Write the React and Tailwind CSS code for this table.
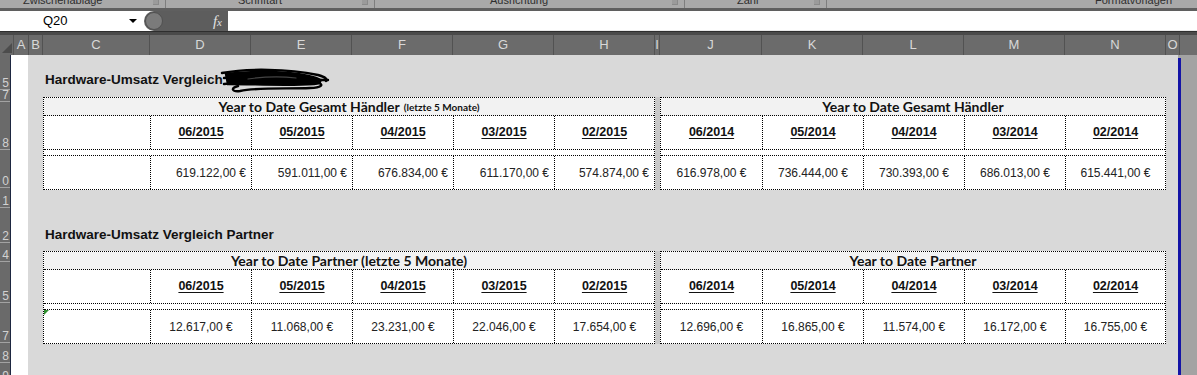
import React from 'react';

const ribbonGroups = [
    { label: 'Zwischenablage', w: 'w-[166px]', pl: 'pl-[23px]' },
    { label: 'Schriftart', w: 'w-[209px]', pl: 'pl-[72px]' },
    { label: 'Ausrichtung', w: 'w-[310px]', pl: 'pl-[115px]' },
    { label: 'Zahl', w: 'w-[142px]', pl: 'pl-[52px]' },
    { label: 'Formatvorlagen', w: 'flex-1', pl: 'pl-[268px]' },
];

const columns = [
    { l: 'A', w: 'w-[15px]' },
    { l: 'B', w: 'w-[14px]' },
    { l: 'C', w: 'w-[107px]' },
    { l: 'D', w: 'w-[101px]' },
    { l: 'E', w: 'w-[101px]' },
    { l: 'F', w: 'w-[101px]' },
    { l: 'G', w: 'w-[101px]' },
    { l: 'H', w: 'w-[101px]' },
    { l: 'I', w: 'w-[5px]' },
    { l: 'J', w: 'w-[102px]' },
    { l: 'K', w: 'w-[101px]' },
    { l: 'L', w: 'w-[101px]' },
    { l: 'M', w: 'w-[101px]' },
    { l: 'N', w: 'w-[101px]' },
    { l: 'O', w: 'w-[14px]' },
];

const rowHeads = [
    ['h-[35px]', '5'],
    ['h-[12px]', '7'],
    ['h-[48px]', '8'],
    ['h-[38px]', '0'],
    ['h-[20px]', '1'],
    ['h-[35px]', '2'],
    ['h-[19px]', '4'],
    ['h-[41px]', '5'],
    ['h-[40px]', '7'],
    ['h-[20px]', '8'],
    ['h-[20px]', '9'],
];

const d2015 = ['06/2015', '05/2015', '04/2015', '03/2015', '02/2015'];
const d2014 = ['06/2014', '05/2014', '04/2014', '03/2014', '02/2014'];

const Block = ({ title, note, dates, values, lead, alignRight, flag }) => (
    <div className={`${lead ? 'w-[612px]' : 'w-[506px]'} border border-dotted border-black bg-white flex flex-col`}>
        <div className="h-[18px] bg-[#f2f2f2] border-b border-dotted border-black flex items-center justify-center font-['Lato',sans-serif] font-bold text-[14px] leading-none text-[#111]">
            <span>{title}</span>
            {note && <span className="ml-[4px] text-[10px]">{note}</span>}
        </div>
        <div className="h-[34px] flex border-b border-dotted border-black">
            {lead && <div className="w-[106px]"></div>}
            {dates.map((d, i) => (
                <div
                    key={d}
                    className={`${i === 4 ? 'w-[100px]' : 'w-[101px]'} ${lead || i > 0 ? 'border-l border-dotted border-black' : ''} flex items-center justify-center font-bold underline underline-offset-[2px] text-[12.5px] text-[#111]`}
                >
                    {d}
                </div>
            ))}
        </div>
        <div className="h-[6px] border-b border-dotted border-black"></div>
        <div className="h-[33px] flex">
            {lead && (
                <div className="w-[106px] relative">
                    {flag && <div className="absolute top-0 left-0 w-0 h-0 border-t-[5px] border-t-[#2f8f2f] border-r-[5px] border-r-transparent"></div>}
                </div>
            )}
            {values.map((v, i) => (
                <div
                    key={v}
                    className={`${i === 4 ? 'w-[100px]' : 'w-[101px]'} ${lead || i > 0 ? 'border-l border-dotted border-black' : ''} flex items-center ${alignRight ? 'justify-end pr-[5px]' : 'justify-center'} text-[12px] text-[#222]`}
                >
                    {v}
                </div>
            ))}
        </div>
    </div>
);

const Scribble = () => (
    <svg className="w-[112px] h-[28px] -ml-[5px]" viewBox="0 0 112 28" fill="none" stroke="#000" strokeWidth="2.4" strokeLinecap="round">
        <path d="M8 8 C40 4, 80 6, 98 12 C104 14, 104 17, 96 18 C70 20, 36 18, 10 18 Z" fill="#000" />
        <path d="M4 7 C30 2, 70 3, 100 9 C108 11, 110 14, 108 15" />
        <path d="M6 12 C34 9, 74 11, 104 14 L110 14" />
        <path d="M6 18 C30 15, 72 16, 100 17 C106 18, 104 22, 92 22 C70 23, 40 21, 22 25 C14 26, 12 22, 20 20" />
        <path d="M30 13 C44 11, 60 10, 78 12" stroke="#444" strokeWidth="1.2" />
    </svg>
);

const App = () => {
    return (
        <div className="w-[1197px] h-[375px] overflow-hidden flex flex-col font-['Liberation_Sans',Arial,sans-serif] bg-white">
            {/* ribbon group labels */}
            <div className="h-[8px] flex bg-[#a9a9a9] overflow-hidden">
                {ribbonGroups.map((g, i) => (
                    <div key={g.label} className={`${g.w} ${g.pl} ${i < 4 ? 'border-r border-[#7e7e7e]' : ''} relative h-full overflow-hidden`}>
                        <span className="block -mt-[6px] text-[11px] leading-[12px] text-[#2e2e2e]">{g.label}</span>
                        {i < 4 && <div className="absolute right-[6px] top-0 w-[6px] h-[5px] bg-[#9b9b9b] border-b border-r border-[#8a8a8a]"></div>}
                    </div>
                ))}
            </div>
            <div className="h-[3px] bg-[#5f5f5f]"></div>

            {/* formula bar */}
            <div className="h-[20px] flex bg-white">
                <div className="w-[144px] flex items-center">
                    <span className="ml-[43px] text-[13px] text-black">Q20</span>
                    <div className="ml-auto mr-[7px] w-0 h-0 border-l-[4px] border-l-transparent border-r-[4px] border-r-transparent border-t-[4px] border-t-black"></div>
                </div>
                <div className="w-[84px] bg-[#5d5d5d] rounded-l-full flex items-center">
                    <div className="ml-[1px] w-[18px] h-[18px] rounded-full bg-[#7b7b7b] border border-[#505050]"></div>
                    <span className="ml-auto mr-[6px] font-['Liberation_Serif',serif] italic text-[15px] leading-none text-[#e2e2e2]">
                        f<span className="text-[11px]">x</span>
                    </span>
                </div>
                <div className="flex-1 bg-white border-b border-[#e8e8e8]"></div>
            </div>
            <div className="h-[4px] bg-[#4a4a4a] border-t border-[#2e2e2e]"></div>

            {/* column headers */}
            <div className="h-[20px] flex bg-[#6b6b6b] text-[13px] text-[#d8d8d8]">
                <div className="w-[14px] border-r border-[#555] flex items-end justify-end pb-[2px] pr-[1px]">
                    <svg width="10" height="10" viewBox="0 0 10 10">
                        <path d="M10 0 L10 10 L0 10 Z" fill="#4c4c4c" />
                    </svg>
                </div>
                {columns.map((c) => (
                    <div key={c.l} className={`${c.w} border-r border-[#525252] flex items-center justify-center`}>
                        {c.l}
                    </div>
                ))}
                <div className="flex-1 bg-[#6e6e6e]"></div>
            </div>

            {/* sheet body */}
            <div className="flex-1 flex overflow-hidden">
                <div className="w-[10px] bg-[#6a6a6a] flex flex-col overflow-hidden">
                    {rowHeads.map(([h, n], i) => (
                        <div key={i} className={`${h} shrink-0 border-b border-[#a2a2a2] flex items-end justify-end pr-[1px] text-[12px] leading-[11px] text-[#d2d2d2] overflow-hidden`}>
                            {n}
                        </div>
                    ))}
                </div>
                <div className="w-[1px] bg-[#1d2640]"></div>
                <div className="w-[17px] bg-white"></div>

                <div className="w-[1150px] bg-[#d9d9d9] pl-[15px] pt-[16px] flex flex-col">
                    <div className="h-[18px] flex items-center pl-[2px] font-bold text-[13.5px] text-[#111]">
                        <span>Hardware-Umsatz Vergleich</span>
                        <Scribble />
                    </div>
                    <div className="mt-[8px] flex">
                        <Block title="Year to Date Gesamt Händler" note="(letzte 5 Monate)" dates={d2015} values={['619.122,00 €', '591.011,00 €', '676.834,00 €', '611.170,00 €', '574.874,00 €']} lead alignRight />
                        <div className="w-[5px] bg-[#c8c8c8]"></div>
                        <Block title="Year to Date Gesamt Händler" dates={d2014} values={['616.978,00 €', '736.444,00 €', '730.393,00 €', '686.013,00 €', '615.441,00 €']} />
                    </div>

                    <div className="mt-[36px] h-[18px] flex items-center pl-[2px] font-bold text-[13.5px] text-[#111]">
                        Hardware-Umsatz Vergleich Partner
                    </div>
                    <div className="mt-[7px] flex">
                        <Block title="Year to Date Partner (letzte 5 Monate)" dates={d2015} values={['12.617,00 €', '11.068,00 €', '23.231,00 €', '22.046,00 €', '17.654,00 €']} lead flag />
                        <div className="w-[5px] bg-[#c8c8c8]"></div>
                        <Block title="Year to Date Partner" dates={d2014} values={['12.696,00 €', '16.865,00 €', '11.574,00 €', '16.172,00 €', '16.755,00 €']} />
                    </div>
                </div>

                <div className="w-[3px] flex flex-col">
                    <div className="h-[3px] bg-[#a3a3a3]"></div>
                    <div className="flex-1 bg-[#1414a6]"></div>
                </div>
                <div className="flex-1 bg-[#a3a3a3]"></div>
            </div>
        </div>
    );
};

export default App;
